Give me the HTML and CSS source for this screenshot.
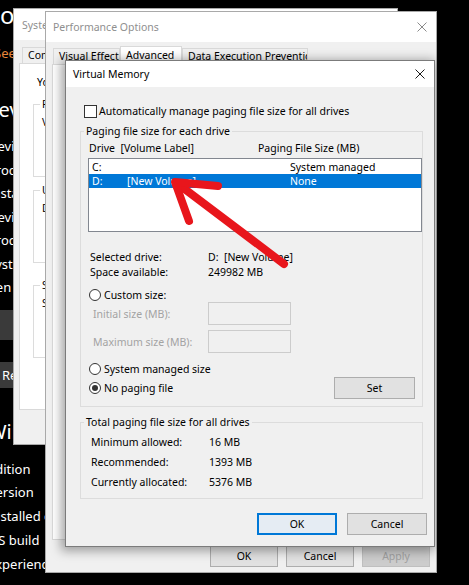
FILE: index.html
```html
<!DOCTYPE html>
<html>
<head>
<meta charset="utf-8">
<title>Virtual Memory</title>
<link rel="stylesheet" href="styles.css">
</head>
<body>
<div class="desktop">
  <div class="settings">
    <div class="s-title">About</div>
    <div class="s-link">See details in Windows Security</div>
    <div class="s-head">Device specifications</div>
    <div class="s-list">
      <div class="s-item">Device name</div>
      <div class="s-item">Processor</div>
      <div class="s-item">Installed RAM</div>
      <div class="s-item">Device ID</div>
      <div class="s-item">Product ID</div>
      <div class="s-item">System type</div>
      <div class="s-item">Pen and touch</div>
    </div>
    <div class="s-btn s-copy">Copy</div>
    <div class="s-btn s-rename">Rename this PC</div>
    <div class="s-head s-head2">Windows specifications</div>
    <div class="s-list s-list2">
      <div class="s-item">Edition</div>
      <div class="s-item">Version</div>
      <div class="s-item">Installed on</div>
      <div class="s-item">OS build</div>
      <div class="s-item">Experience</div>
    </div>
  </div>

  <div class="win sysprop">
    <div class="win-title sp-title"><span>System Properties</span></div>
    <div class="tabs sp-tabs">
      <div class="tab t-cn">Computer Name</div>
      <div class="tab t-hw">Hardware</div>
      <div class="tab sel t-adv">Advanced</div>
    </div>
    <div class="tabpage sp-page">
      <p class="sp-intro">You must be logged on as an Administrator to make most of these changes.</p>
      <fieldset class="sp-group">
        <legend>Performance</legend>
        <p>Visual effects, processor scheduling, memory usage, and virtual memory</p>
      </fieldset>
      <fieldset class="sp-group sp-g2">
        <legend>User Profiles</legend>
        <p>Desktop settings related to your sign-in</p>
      </fieldset>
      <fieldset class="sp-group sp-g3">
        <legend>Startup and Recovery</legend>
        <p>System startup, system failure, and debugging information</p>
      </fieldset>
    </div>
  </div>

  <div class="win perf">
    <div class="win-title pf-title">
      <span>Performance Options</span>
      <svg class="x-icon" width="10" height="10" viewBox="0 0 10 10"><path d="M0.5 0.5 L9.5 9.5 M9.5 0.5 L0.5 9.5" stroke="#8a8a8a" stroke-width="1" fill="none"/></svg>
    </div>
    <div class="tabs pf-tabs">
      <div class="tab t-ve">Visual Effects</div>
      <div class="tab sel t-ad">Advanced</div>
      <div class="tab t-dep">Data Execution Prevention</div>
    </div>
    <div class="tabpage pf-page"></div>
    <div class="pf-buttons">
      <button class="btn pf-btn">OK</button>
      <button class="btn pf-btn">Cancel</button>
      <button class="btn pf-btn disabled">Apply</button>
    </div>
  </div>

  <div class="dialog vm">
    <div class="dlg-title">
      <span>Virtual Memory</span>
      <svg class="x-icon" width="10" height="10" viewBox="0 0 10 10"><path d="M0.5 0.5 L9.5 9.5 M9.5 0.5 L0.5 9.5" stroke="#1a1a1a" stroke-width="1" fill="none"/></svg>
    </div>
    <div class="dlg-body">
      <div class="check-row"><span class="checkbox"></span><span>Automatically manage paging file size for all drives</span></div>

      <fieldset class="group g1">
        <legend>Paging file size for each drive</legend>
        <div class="list-head"><span class="lh-drive">Drive  [Volume Label]</span><span>Paging File Size (MB)</span></div>
        <div class="listbox">
          <div class="lrow"><span class="col-drive">C:</span><span class="col-label"></span><span>System managed</span></div>
          <div class="lrow sel"><span class="col-drive">D:</span><span class="col-label">[New Volume]</span><span>None</span></div>
        </div>
        <div class="info">
          <span>Selected drive:</span><span class="pre">D:  [New Volume]</span>
          <span>Space available:</span><span>249982 MB</span>
        </div>
        <div class="radio-row r-custom"><span class="radio"></span><span>Custom size:</span></div>
        <div class="field-row"><span class="dis">Initial size (MB):</span><span class="input"></span></div>
        <div class="field-row f2"><span class="dis">Maximum size (MB):</span><span class="input"></span></div>
        <div class="radio-row r-sys"><span class="radio"></span><span>System managed size</span></div>
        <div class="radio-row r-none"><span class="radio checked"></span><span>No paging file</span><button class="btn set">Set</button></div>
      </fieldset>

      <fieldset class="group g2">
        <legend>Total paging file size for all drives</legend>
        <div class="totals">
          <span>Minimum allowed:</span><span>16 MB</span>
          <span>Recommended:</span><span>1393 MB</span>
          <span>Currently allocated:</span><span>5376 MB</span>
        </div>
      </fieldset>

      <div class="dlg-buttons">
        <button class="btn default">OK</button>
        <button class="btn">Cancel</button>
      </div>
    </div>
  </div>

  <svg class="arrow" width="469" height="585" viewBox="0 0 469 585">
    <g stroke="#e8161c" stroke-width="8" stroke-linecap="round" stroke-linejoin="round" fill="none">
      <path d="M284 264 L178 184"/>
      <path d="M218 186 L175 182 L189 221"/>
    </g>
  </svg>
</div>
</body>
</html>
```

FILE: styles.css
```css
* { box-sizing: border-box; }
html, body { margin: 0; padding: 0; }
body { background: #000; font-family: "Noto Sans", "Open Sans", sans-serif; }
p { margin: 0; }
button { font: inherit; color: inherit; padding: 0; }

.desktop { position: relative; width: 469px; height: 585px; overflow: hidden; background: #000; }

/* background settings page */
.settings { margin-left: -12px; color: #fff; white-space: nowrap; }
.s-title { font-size: 24px; line-height: 30px; margin-left: -18px; }
.s-link { font-size: 13px; line-height: 20px; margin-top: 13px; margin-left: 6px; color: #e8873a; }
.s-head { font-size: 20px; line-height: 26px; margin-top: 34px; margin-left: -4px; }
.s-list { margin-top: 12px; }
.s-item { font-size: 13px; line-height: 23.5px; }
.s-btn { background: #3a3a3a; font-size: 13px; width: 140px; }
.s-copy { height: 30px; line-height: 30px; margin-top: 10px; padding-left: 40px; }
.s-rename { height: 26px; line-height: 26px; margin-top: 22px; padding-left: 14px; }
.s-head2 { margin-top: 31px; margin-left: 0; }
.s-list2 { margin-top: 13px; }
.s-list2 .s-item { line-height: 23.75px; }

/* generic windows */
.win { position: absolute; display: flex; flex-direction: column; background: #f0f0f0; border: 1px solid #a9a9a9; font-size: 10.5px; line-height: 14px; color: #000; }
.win-title { background: #fff; display: flex; align-items: center; justify-content: space-between; padding: 0 9px 0 8px; color: #8f8f8f; flex: none; }
.tabs { display: flex; align-items: flex-end; flex: none; }
.tab { height: 16px; line-height: 14px; padding: 0 5px; background: #f0f0f0; border: 1px solid #d9d9d9; border-bottom: none; white-space: nowrap; overflow: hidden; flex: none; }
.tab.sel { height: 18px; background: #fff; padding-top: 1px; }
.tabpage { background: #fff; border: 1px solid #d9d9d9; flex: none; }

.sysprop { left: 13px; top: 8px; width: 385px; height: 437px; }
.sp-title { height: 31px; }
.sp-tabs { height: 23px; padding-left: 8px; }
.t-cn { width: 84px; }
.t-hw { width: 58px; }
.t-adv { width: 62px; }
.sp-page { margin: 0 5px; height: 347px; padding: 11px 0 0 13px; }
.sp-intro { padding-left: 4px; white-space: nowrap; }
.sp-group { margin: 8px 12px 0 0; padding: 4px 0 0 8px; border: 1px solid #dcdcdc; height: 80px; white-space: nowrap; overflow: hidden; }
.sp-group legend { padding: 0 2px; margin-left: -2px; }
.sp-g2 { margin-top: 6px; }
.sp-g3 { margin-top: 15px; }

.perf { left: 45px; top: 11px; width: 392px; height: 562px; }
.pf-title { height: 30px; padding-left: 7px; }
.pf-tabs { height: 22px; padding-left: 7px; }
.t-ve { width: 67px; }
.t-ad { width: 62px; }
.t-dep { width: 126px; }
.pf-page { margin: 0 6px; height: 476px; }
.pf-buttons { display: flex; justify-content: flex-end; gap: 8px; margin-top: 4px; padding-right: 6px; }
.pf-btn { width: 68px; height: 23px; }

/* buttons */
.btn { background: #e1e1e1; border: 1px solid #adadad; text-align: center; line-height: 14px; }
.btn.disabled { background: #cccccc; border-color: #bfbfbf; color: #a0a0a0; }
.btn.default { border: 2px solid #0078d7; background: #e5ecf3; }

/* virtual memory dialog */
.dialog { position: absolute; background: #f0f0f0; border: 1px solid #7b7b7b; box-shadow: -2px 2px 10px 2px rgba(0, 0, 0, 0.35); font-size: 10.5px; line-height: 14px; color: #000; }
.vm { left: 65px; top: 60px; width: 370px; }
.dlg-title { height: 26px; background: #fff; display: flex; align-items: center; justify-content: space-between; padding: 0 9px 0 7px; }
.dlg-body { padding: 17px 11px 11px 14px; }

.check-row { display: flex; align-items: center; gap: 2px; height: 14px; margin-left: 4px; }
.checkbox { width: 13px; height: 13px; border: 1px solid #333; background: #fff; flex: none; }

.group { margin: 0; min-width: 0; border: 1px solid #dcdcdc; padding: 3px 0 7px 7px; }
.group legend { padding: 0 2px; margin-left: -4px; line-height: 14px; }
.g1 { margin-top: 6px; }
.g2 { margin-top: 8px; padding-bottom: 6px; }

.list-head { display: flex; height: 14px; padding-left: 1px; margin-bottom: 3px; white-space: pre; }
.lh-drive { width: 169px; flex: none; }
.listbox { height: 74px; border: 1px solid #828790; background: #fff; padding-top: 1px; }
.lrow { display: flex; height: 14px; padding-left: 3px; white-space: pre; }
.lrow.sel { background: #0078d7; color: #fff; }
.col-drive { width: 35px; flex: none; }
.col-label { width: 163px; flex: none; }

.info { display: grid; grid-template-columns: 118px auto; margin-top: 18px; padding-left: 2px; line-height: 15px; }
.pre { white-space: pre; }

.radio-row { display: flex; align-items: center; gap: 3px; height: 14px; padding-left: 1px; }
.radio { width: 12px; height: 12px; border-radius: 50%; border: 1px solid #333; background: #fff; flex: none; position: relative; }
.radio.checked::after { content: ""; position: absolute; left: 2px; top: 2px; width: 6px; height: 6px; border-radius: 50%; background: #333; }
.r-custom { margin-top: 8px; }
.r-sys { margin-top: 9px; }
.r-none { margin-top: 1px; height: 22px; }
.btn.set { width: 81px; height: 22px; margin-left: auto; margin-right: 7px; }

.field-row { display: flex; align-items: center; height: 23px; padding-left: 5px; }
.f2 { margin-top: 5px; }
.dis { width: 115px; flex: none; color: #a3a3a3; }
.input { width: 83px; height: 23px; border: 1px solid #cccccc; background: #f0f0f0; }

.totals { display: grid; grid-template-columns: 118px auto; padding-left: 3px; line-height: 20px; }

.dlg-buttons { display: flex; justify-content: flex-end; gap: 10px; margin-top: 14px; margin-right: -4px; }
.dlg-buttons .btn { width: 80px; height: 22px; }

.arrow { position: absolute; left: 0; top: 0; pointer-events: none; }
```
